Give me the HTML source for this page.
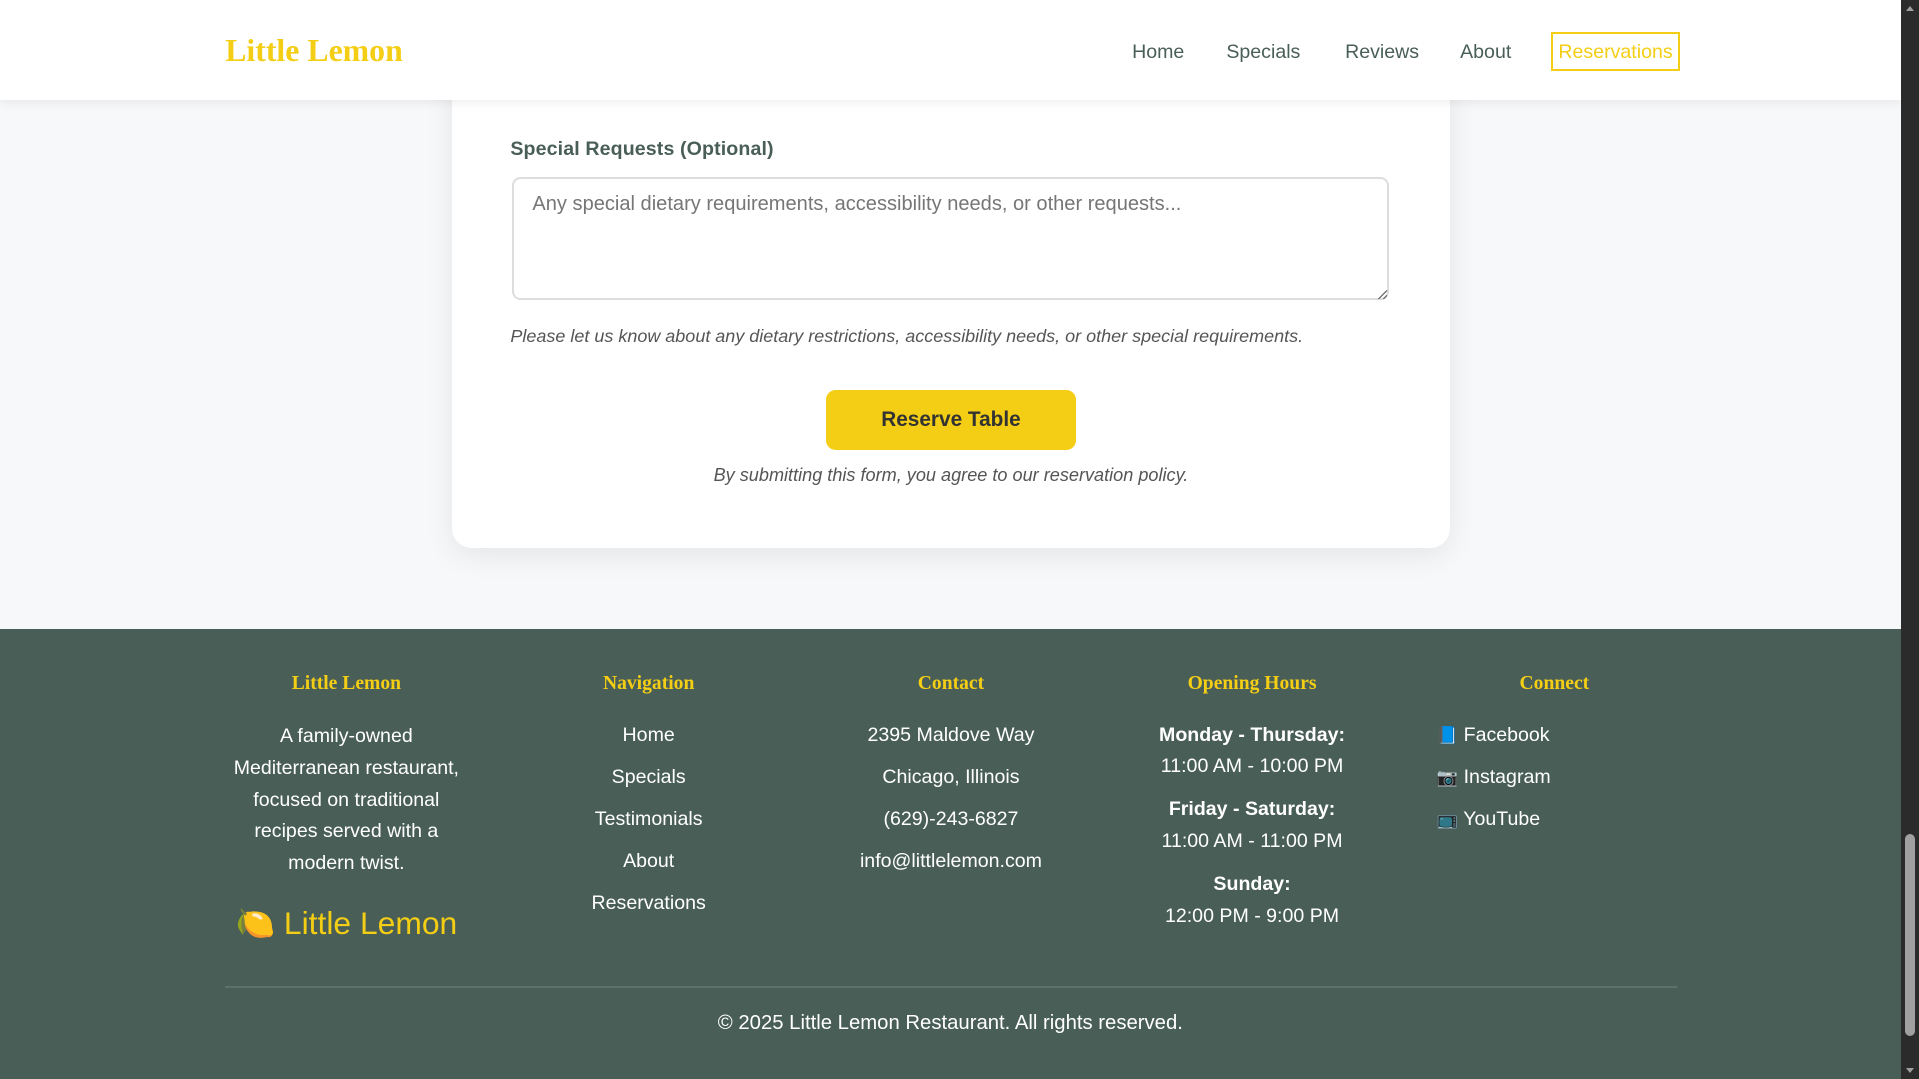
<!DOCTYPE html>
<html><head><meta charset="utf-8">
<style>
html,body{margin:0;padding:0;width:1919px;height:1079px;overflow:hidden;background:#495E57;}
#wrap{zoom:1.2239;width:1553px;height:882px;position:absolute;left:0;top:0;overflow:hidden;font-family:"Liberation Sans",sans-serif;}
.abs{position:absolute;}
#main{left:0;top:0;width:1553px;height:514px;background:#f7f8fa;}
#card{left:369px;top:40px;width:816px;height:408px;background:#fff;border-radius:16px;box-shadow:0 6px 24px rgba(0,0,0,0.08);}
#hdr{left:0;top:0;width:1553px;height:82px;background:#fff;box-shadow:0 2px 8px rgba(0,0,0,0.08);}
.logo{font-family:"Liberation Serif",serif;font-weight:bold;color:#F4CE14;}
.nav{top:33px;font-size:16px;color:#495E57;line-height:20px;}
#foot{left:0;top:514px;width:1553px;height:368px;background:#495E57;}
.col{position:absolute;width:240px;text-align:center;color:#fff;font-size:16px;}
.col h4{margin:0;font-family:"Liberation Serif",serif;font-weight:bold;color:#F4CE14;font-size:16px;line-height:20px;}
</style></head><body>
<div id="wrap">
<div id="main" class="abs"></div>
<div id="card" class="abs"></div>
<div class="abs" style="left:417px;top:113px;font-size:16px;font-weight:bold;color:#495E57;letter-spacing:0.1px;">Special Requests (Optional)</div>
<div class="abs" style="left:418px;top:145px;width:714px;height:97px;border:2px solid #ddd;border-radius:7px;background:#fff;"></div>
<div class="abs" style="left:435px;top:158px;font-size:16.4px;color:#767676;">Any special dietary requirements, accessibility needs, or other requests...</div>
<svg class="abs" style="left:1124px;top:235px" width="10" height="10"><path d="M9 2L2 9M9 6L6 9" stroke="#666" stroke-width="1"/></svg>
<div class="abs" style="left:417px;top:266px;font-size:14.7px;font-style:italic;color:#555;">Please let us know about any dietary restrictions, accessibility needs, or other special requirements.</div>
<div class="abs" style="left:675px;top:319px;width:204px;height:49px;background:#F4CE14;border-radius:8px;text-align:center;line-height:49px;font-size:17px;font-weight:bold;color:#333;">Reserve Table</div>
<div class="abs" style="left:369px;width:816px;text-align:center;top:380px;font-size:14.8px;font-style:italic;color:#555;">By submitting this form, you agree to our reservation policy.</div>

<div id="hdr" class="abs"></div>
<div class="abs logo" style="left:184px;top:27px;font-size:26px;">Little Lemon</div>
<div class="abs nav" style="left:925px;">Home</div>
<div class="abs nav" style="left:1002px;">Specials</div>
<div class="abs nav" style="left:1099px;">Reviews</div>
<div class="abs nav" style="left:1193px;">About</div>
<div class="abs" style="left:1267px;top:26px;width:102px;height:29px;border:2px solid #F4CE14;"></div>
<div class="abs nav" style="left:1267px;width:106px;text-align:center;color:#F4CE14;">Reservations</div>

<div id="foot" class="abs"></div>
<div class="col" style="left:163px;top:549px;">
<h4>Little Lemon</h4>
<div style="margin-top:20px;line-height:26px;">A family-owned<br>Mediterranean restaurant,<br>focused on traditional<br>recipes served with a<br>modern twist.</div>
<div style="margin-top:20px;font-size:26px;color:#F4CE14;">🍋 Little Lemon</div>
</div>
<div class="col" style="left:410px;top:549px;line-height:34.3px;">
<h4>Navigation</h4>
<div style="margin-top:15px;">Home<br>Specials<br>Testimonials<br>About<br>Reservations</div>
</div>
<div class="col" style="left:657px;top:549px;line-height:34.3px;">
<h4>Contact</h4>
<div style="margin-top:15px;">2395 Maldove Way<br>Chicago, Illinois<br>(629)-243-6827<br>info@littlelemon.com</div>
</div>
<div class="col" style="left:903px;top:549px;line-height:26px;">
<h4>Opening Hours</h4>
<div style="margin-top:19px;"><b>Monday - Thursday:</b><br>11:00 AM - 10:00 PM</div>
<div style="margin-top:9px;"><b>Friday - Saturday:</b><br>11:00 AM - 11:00 PM</div>
<div style="margin-top:9px;"><b>Sunday:</b><br>12:00 PM - 9:00 PM</div>
</div>
<div class="col" style="left:1150px;top:549px;line-height:34.3px;">
<h4>Connect</h4>
<div style="margin-top:15px;text-align:left;padding-left:24px;">
<span style="font-size:14px">📘</span> Facebook<br><span style="font-size:14px">📷</span> Instagram<br><span style="font-size:14px">📺</span> YouTube</div>
</div>
<div class="abs" style="left:184px;top:806px;width:1186px;height:1px;background:#5d7069;"></div>
<div class="abs" style="left:0;width:1553px;top:827px;text-align:center;color:#fff;font-size:16.6px;">© 2025 Little Lemon Restaurant. All rights reserved.</div>
</div>
<div style="position:absolute;left:1901px;top:0;width:18px;height:1079px;background:#2b2b2b;"></div>
<div style="position:absolute;left:1905px;top:834px;width:10px;height:202px;background:#a0a0a0;border-radius:5px;"></div>
<svg style="position:absolute;left:1901px;top:0" width="18" height="1079"><path d="M5 11L9 6L13 11Z M5 1068L9 1073L13 1068Z" fill="#a0a0a0"/></svg>
</body></html>
